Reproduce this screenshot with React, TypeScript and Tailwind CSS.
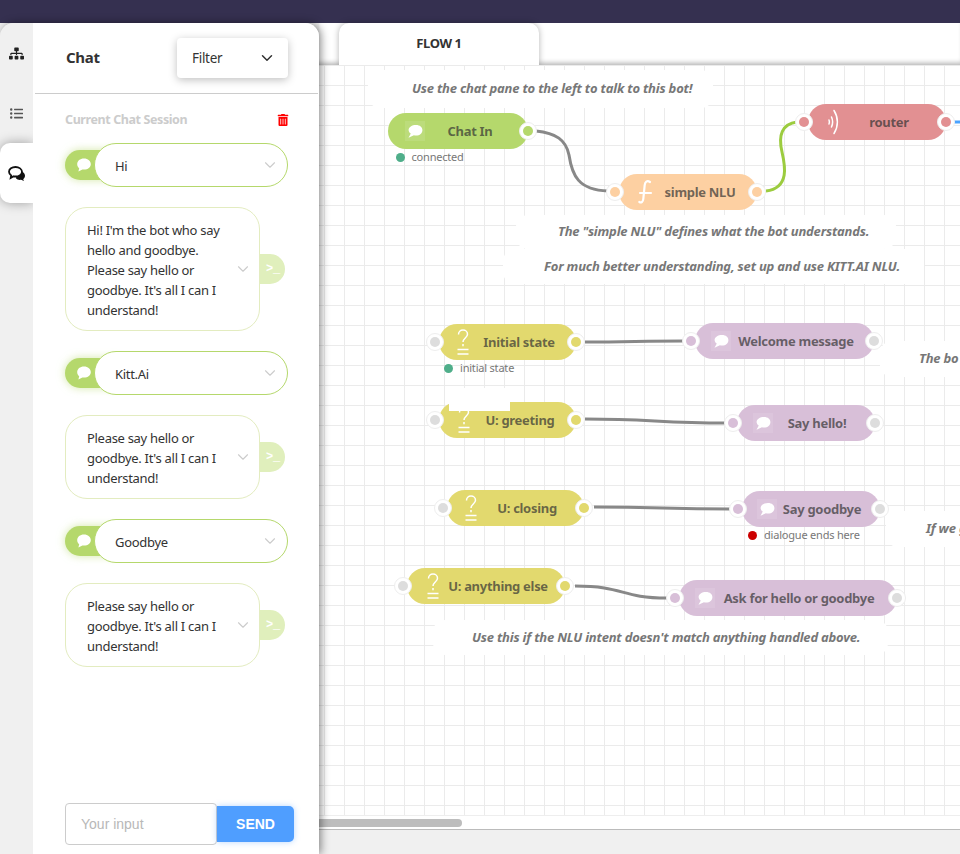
import { ChevronDown } from "lucide-react";
import { FaSitemap, FaListUl, FaTrashAlt } from "react-icons/fa";

// canvas starts at page x=319, y=65
const OX = 319;
const OY = 65;

type NodeData = {
  x: number;
  y: number;
  w: number;
  label: string;
  cx: number;
  color: string;
  port: string;
  icon: "chat" | "func" | "radio" | "switch";
  iconX: number;
  left?: boolean;
  leftPort?: string;
  rightPort?: string;
  status?: { text: string; dot: string; x: number };
};

const GREEN = "#b5d86c";
const PEACH = "#fdd0a2";
const ROSE = "#e29092";
const YELLOW = "#e2d96e";
const PLUM = "#d8bfd8";
const IDLE = "#dddddd";

const nodes: NodeData[] = [
  { x: 388, y: 113, w: 140, label: "Chat In", cx: 470, color: GREEN, port: GREEN, icon: "chat", iconX: 405, status: { text: "connected", dot: "#4fae8a", x: 395.5 } },
  { x: 619, y: 174, w: 138, label: "simple NLU", cx: 700, color: PEACH, port: PEACH, icon: "func", iconX: 635, left: true },
  { x: 808, y: 104, w: 138, label: "router", cx: 889, color: ROSE, port: ROSE, icon: "radio", iconX: 824, left: true },
  { x: 439, y: 324, w: 137, label: "Initial state", cx: 519, color: YELLOW, port: YELLOW, leftPort: IDLE, icon: "switch", iconX: 453, left: true, status: { text: "initial state", dot: "#4fae8a", x: 444 } },
  { x: 695, y: 323, w: 179, label: "Welcome message", cx: 796, color: PLUM, port: PLUM, rightPort: IDLE, icon: "chat", iconX: 711, left: true },
  { x: 439, y: 402, w: 137, label: "U: greeting", cx: 520, color: YELLOW, port: YELLOW, leftPort: IDLE, icon: "switch", iconX: 454, left: true },
  { x: 737, y: 405, w: 138, label: "Say hello!", cx: 817, color: PLUM, port: PLUM, rightPort: IDLE, icon: "chat", iconX: 753, left: true },
  { x: 447, y: 490, w: 137, label: "U: closing", cx: 527, color: YELLOW, port: YELLOW, leftPort: IDLE, icon: "switch", iconX: 461, left: true },
  { x: 742, y: 491, w: 138, label: "Say goodbye", cx: 822, color: PLUM, port: PLUM, rightPort: IDLE, icon: "chat", iconX: 757, left: true, status: { text: "dialogue ends here", dot: "#cc0000", x: 748 } },
  { x: 407, y: 568, w: 158, label: "U: anything else", cx: 498, color: YELLOW, port: YELLOW, leftPort: IDLE, icon: "switch", iconX: 423, left: true },
  { x: 679, y: 580, w: 218, label: "Ask for hello or goodbye", cx: 799, color: PLUM, port: PLUM, rightPort: IDLE, icon: "chat", iconX: 695, left: true },
];

const comments = [
  { x: 368, y: 70, w: 345, h: 38, pl: 44, text: "Use the chat pane to the left to talk to this bot!" },
  { x: 516, y: 215, w: 380, h: 34, pl: 42, text: 'The "simple NLU" defines what the bot understands.' },
  { x: 503, y: 249, w: 421, h: 35, pl: 41, text: "For much better understanding, set up and use KITT.AI NLU." },
  { x: 880, y: 341, w: 100, h: 36, pl: 39, text: "The bo" },
  { x: 886, y: 511, w: 100, h: 36, pl: 40, text: "If we g" },
  { x: 433, y: 620, w: 455, h: 35, pl: 39, text: "Use this if the NLU intent doesn't match anything handled above." },
];

const wires = [
  { d: "M536 131 C556 133 566 140 569 155 C572 175 578 190 608 191", color: "#888888" },
  { d: "M766 191 C790 188 785 165 782 152 C778 135 782 124 797 122", color: "#9ccc3f" },
  { d: "M953 122 L960 122", color: "#4aa3ff" },
  { d: "M585 342 C630 342 640 341 684 341", color: "#888888" },
  { d: "M585 419 C650 419 660 423 726 423", color: "#888888" },
  { d: "M594 507 C660 507 665 509 730 509", color: "#888888" },
  { d: "M575 586 C625 586 620 598 667 598", color: "#888888" },
];

function NodeIcon({ icon }: { icon: NodeData["icon"] }) {
  if (icon === "chat") {
    return (
      <div className="w-5 h-5 bg-white/10">
        <svg width="20" height="20" viewBox="0 0 20 20">
          <path
            fill="#fff"
            d="M11 4C7 4 3.600 6.100 3.600 9c0 1.500.9 2.800 2.200 3.600L3.500 16.800l5.400-2.500c.7.100 1.400.2 2.100.2 3.900 0 6.400-2.300 6.400-5.300S14.900 4 11 4z"
          />
        </svg>
      </div>
    );
  }
  if (icon === "func") {
    return (
      <svg width="20" height="36" viewBox="0 0 20 36" fill="none" stroke="#fff" strokeWidth="2.200" strokeLinecap="round">
        <path d="M15 8c-3-2-5 0-5.300 3l-1.400 14c-.3 3-2 4-4 3" />
        <path d="M5 19h11" />
      </svg>
    );
  }
  if (icon === "radio") {
    return (
      <svg width="20" height="36" viewBox="0 0 20 36" fill="none" stroke="#fff" strokeWidth="1.500" strokeLinecap="round">
        <path d="M5 16c.6 1.400.6 2.600 0 4" />
        <path d="M7.500 13c1.500 3.300 1.500 6.700 0 10" />
        <path d="M10 6.500c4.500 7 4.500 16 0 23" />
      </svg>
    );
  }
  return (
    <svg width="20" height="36" viewBox="0 0 20 36" fill="none" stroke="#fff" strokeWidth="1.500">
      <path d="M5.500 10.500C5.500 7.800 7.500 6 10 6s4.500 1.800 4.500 4.200c0 3.600-4.500 4-4.500 7.800" />
      <path d="M10 20v2.200" />
      <path d="M4.500 25.500h11M4.500 30h11" />
    </svg>
  );
}

function Port({ cx, cy, color }: { cx: number; cy: number; color: string }) {
  return (
    <div
      className="absolute w-[18px] h-[18px] rounded-full bg-white border border-[#eeeeee] flex items-center justify-center"
      style={{ left: cx - 9, top: cy - 9 }}
    >
      <div className="w-[10px] h-[10px] rounded-full" style={{ background: color }} />
    </div>
  );
}

function FlowNode({ node }: { node: NodeData }) {
  const midY = node.y + 18 - OY;
  return (
    <>
      <div
        className="absolute h-9 rounded-[18px]"
        style={{ left: node.x - OX, top: node.y - OY, width: node.w, background: node.color }}
      >
        <div className="absolute top-0 h-9 flex items-center" style={{ left: node.iconX - node.x }}>
          <NodeIcon icon={node.icon} />
        </div>
        <span
          className="absolute top-0 h-9 leading-[36px] -translate-x-1/2 whitespace-nowrap text-[13px] font-bold text-[#333333]/70"
          style={{ left: node.cx - node.x }}
        >
          {node.label}
        </span>
      </div>
      {node.left && <Port cx={node.x - 4 - OX} cy={midY} color={node.leftPort ?? node.port} />}
      <Port cx={node.x + node.w - OX} cy={midY} color={node.rightPort ?? node.port} />
      {node.status && (
        <div
          className="absolute flex items-center gap-[7px] h-4 text-[11px] tracking-[-0.2px] text-[#777777] whitespace-nowrap"
          style={{ left: node.status.x - OX, top: node.y + 36 - OY }}
        >
          <span className="w-[9px] h-[9px] rounded-full" style={{ background: node.status.dot }} />
          {node.status.text}
        </div>
      )}
    </>
  );
}

function UserMessage({ text }: { text: string }) {
  return (
    <div className="relative h-11">
      <div className="absolute left-0 top-[7px] w-[50px] h-[30px] rounded-l-full bg-[#b5d86c] shadow-[0_0_8px_rgba(181,216,108,0.6)] pl-[11px] pt-[7px]">
        <svg width="16" height="16" viewBox="0 0 20 20">
          <path fill="#fff" d="M10 2C5 2 1.500 5 1.500 9c0 2 1 3.800 2.500 5l-1 4 5-2.500c.7.100 1.300.2 2 .2 5 0 8.500-3 8.500-6.700S15 2 10 2z" />
        </svg>
      </div>
      <div className="absolute left-[29px] right-0 inset-y-0 rounded-full bg-white border border-[#b5d86c] flex items-center pl-[20px] pr-[8px] justify-between text-[13px] text-[#333]">
        <span className="pt-[3px]">{text}</span>
        <ChevronDown size={18} strokeWidth={1.5} className="text-[#cccccc]" />
      </div>
    </div>
  );
}

function BotMessage({ lines }: { lines: string[] }) {
  return (
    <div className="relative w-[220px]">
      <div className="absolute right-0 top-1/2 -translate-y-1/2 w-[40px] h-[30px] rounded-r-full bg-[#e0efbc] text-white text-[12px] font-bold leading-[30px] pl-[21px] font-['Liberation_Mono',monospace]">
        &gt;_
      </div>
      <div className="relative w-[195px] rounded-[22px] bg-white border border-[#e3ecc0] pl-[21px] pt-[12px] pb-[10px] text-[13px] leading-[20px] text-[#333]">
        {lines.map((l) => (
          <div key={l} className="whitespace-nowrap">{l}</div>
        ))}
        <ChevronDown size={18} strokeWidth={1.5} className="absolute right-[7px] top-1/2 -translate-y-1/2 text-[#cccccc]" />
      </div>
    </div>
  );
}

export default function App() {
  return (
    <div className="w-[960px] h-[854px] overflow-hidden flex flex-col bg-[#f0f0f0] text-[13px] font-['Noto_Sans',sans-serif] tracking-[-0.3px]">
      <div className="h-[23px] shrink-0 bg-[#353050]" />
      <div className="flex-1 flex min-h-0 relative">
        {/* left rail + chat pane */}
        <div className="relative z-20 w-[319px] shrink-0 flex rounded-t-[14px] overflow-hidden shadow-[2px_0_8px_rgba(0,0,0,0.45)]">
          <div className="w-[33px] shrink-0 bg-[#f0f0f0] flex flex-col">
            <div className="h-[60px] flex items-center justify-center">
              <FaSitemap size={15} className="text-[#222]" />
            </div>
            <div className="h-[60px] flex items-center justify-center">
              <FaListUl size={13} className="text-[#555]" />
            </div>
            <div className="h-[60px] rounded-l-[10px] bg-white flex items-center justify-center shadow-[0_0_12px_rgba(0,0,0,0.35)]">
              <svg width="17" height="15" viewBox="0 0 17 15">
                <path fill="#111" d="M9 5h2c3 0 6 1.800 6 4.700 0 1.500-.8 2.700-1.800 3.500l.8 1.800-3-1.200c-2 .3-4-.2-5-1.500z" />
                <path fill="#fff" stroke="#111" strokeWidth="1.800" d="M7.500 1C4 1 1 3 1 5.800c0 1.500.9 2.800 2.200 3.600L2.700 12l3-1.700c.6.100 1.200.2 1.800.2 3.500 0 6.500-2 6.500-4.700S11 1 7.500 1z" />
              </svg>
            </div>
          </div>
          <div className="flex-1 bg-white flex flex-col">
            <div className="h-[71px] shrink-0 border-b border-[#cccccc] ml-[2px] mr-px pl-[31px] pr-[30px] flex items-center justify-between">
              <span className="text-[15px] font-bold text-[#333] -mt-[2px]">Chat</span>
              <div className="w-[111px] h-10 rounded bg-white shadow-[0_2px_8px_rgba(0,0,0,0.25)] pl-[15px] pr-[12px] flex items-center justify-between text-[13.500px] text-[#333]">
                Filter
                <ChevronDown size={18} className="text-[#333]" />
              </div>
            </div>
            <div className="flex-1 flex flex-col pl-[32px] pr-[25px]">
              <div className="h-[49px] pt-[3px] flex items-center justify-between text-[12.500px] tracking-[-0.4px] font-bold text-[#cccccc] pr-[5px]">
                Current Chat Session
                <FaTrashAlt size={12} className="text-[#ff0000]" />
              </div>
              <div className="flex flex-col gap-5 mr-[6px]">
                <UserMessage text="Hi" />
                <BotMessage lines={["Hi! I'm the bot who say", "hello and goodbye.", "Please say hello or", "goodbye. It's all I can I", "understand!"]} />
                <UserMessage text="Kitt.Ai" />
                <BotMessage lines={["Please say hello or", "goodbye. It's all I can I", "understand!"]} />
                <UserMessage text="Goodbye" />
                <BotMessage lines={["Please say hello or", "goodbye. It's all I can I", "understand!"]} />
              </div>
              <div className="mt-auto mb-[9px] flex items-center font-['Liberation_Sans',sans-serif] tracking-normal">
                <div className="w-[152px] h-[42px] rounded border border-[#cccccc] pl-[15px] flex items-center text-[14px] text-[#b8b8b8]">
                  Your input
                </div>
                <div className="w-[77px] h-9 rounded-r-[5px] bg-[#4f9eff] text-white font-bold text-[14px] flex items-center justify-center shadow-[0_0_6px_rgba(79,158,255,0.4)]">
                  SEND
                </div>
              </div>
            </div>
          </div>
        </div>

        {/* flow workspace */}
        <div className="flex-1 min-w-0 flex flex-col">
          <div className="h-[42px] shrink-0 bg-white pl-[20px] shadow-[inset_0_-5px_5px_-3px_rgba(0,0,0,0.3)]">
            <div className="w-[200px] h-[42px] bg-white rounded-t-[10px] shadow-[0_0_6px_rgba(0,0,0,0.3)] flex items-center justify-center text-[13px] tracking-[-0.4px] font-bold text-[#333]">
              FLOW 1
            </div>
          </div>
          <div className="relative h-[750px] shrink-0 overflow-hidden bg-white bg-[linear-gradient(to_right,#ebebeb_1px,transparent_1px),linear-gradient(to_bottom,#ebebeb_1px,transparent_1px)] bg-[size:20px_20px] bg-[position:5px_0px]">
            {comments.map((c) => (
              <div
                key={c.text}
                className="absolute flex items-center bg-white rounded-[12px] whitespace-nowrap text-[13px] tracking-[-0.2px] font-bold italic text-[#777777]"
                style={{ left: c.x - OX, top: c.y - OY, width: c.w, height: c.h, paddingLeft: c.pl }}
              >
                {c.text}
              </div>
            ))}
            <svg className="absolute left-0 top-0" width="641" height="750" viewBox={`${OX} ${OY} 641 750`} fill="none">
              {wires.map((w) => (
                <path key={w.d} d={w.d} stroke={w.color} strokeWidth="3" />
              ))}
            </svg>
            {nodes.map((n) => (
              <FlowNode key={n.label} node={n} />
            ))}
            {/* stray white patch over the U: greeting node */}
            <div className="absolute left-[130px] top-[323px] w-[61px] h-[23px] bg-white" />
          </div>
          <div className="h-[15px] shrink-0 bg-white border-t border-b border-t-[#eeeeee] border-b-[#bbbbbb] pt-[3px]">
            <div className="w-[143px] h-2 rounded-r-full bg-[#bdbdbd]" />
          </div>
        </div>
      </div>
    </div>
  );
}
